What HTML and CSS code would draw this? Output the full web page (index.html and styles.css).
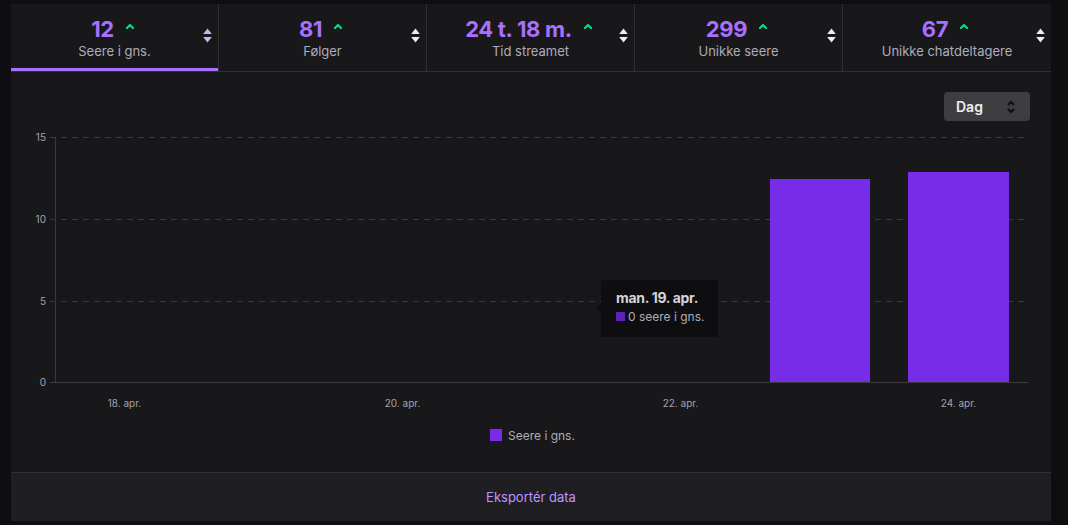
FILE: index.html
```html
<!DOCTYPE html>
<html lang="da">
<head>
  <meta charset="UTF-8">
  <meta name="viewport" content="width=device-width, initial-scale=1.0">
  <title>Statistik</title>
  <link rel="stylesheet" href="styles.css">
</head>
<body>
  <div id="card">
    <div class="tabs">
      <div class="tab active">
        <div class="tab-value"><span class="num">12</span><svg class="up" viewBox="0 0 8 5"><path d="M0.5 4.5 L4 1 L7.5 4.5" /></svg></div>
        <div class="tab-label">Seere i gns.</div>
        <svg class="sort" viewBox="0 0 8 14"><path d="M4 0.5 L8 5.5 L0 5.5 Z M4 13.5 L8 8.5 L0 8.5 Z" /></svg>
      </div>
      <div class="tab">
        <div class="tab-value"><span class="num">81</span><svg class="up" viewBox="0 0 8 5"><path d="M0.5 4.5 L4 1 L7.5 4.5" /></svg></div>
        <div class="tab-label">Følger</div>
        <svg class="sort" viewBox="0 0 8 14"><path d="M4 0.5 L8 5.5 L0 5.5 Z M4 13.5 L8 8.5 L0 8.5 Z" /></svg>
      </div>
      <div class="tab">
        <div class="tab-value"><span class="num">24 t. 18 m.</span><svg class="up" viewBox="0 0 8 5"><path d="M0.5 4.5 L4 1 L7.5 4.5" /></svg></div>
        <div class="tab-label">Tid streamet</div>
        <svg class="sort" viewBox="0 0 8 14"><path d="M4 0.5 L8 5.5 L0 5.5 Z M4 13.5 L8 8.5 L0 8.5 Z" /></svg>
      </div>
      <div class="tab">
        <div class="tab-value"><span class="num">299</span><svg class="up" viewBox="0 0 8 5"><path d="M0.5 4.5 L4 1 L7.5 4.5" /></svg></div>
        <div class="tab-label">Unikke seere</div>
        <svg class="sort" viewBox="0 0 8 14"><path d="M4 0.5 L8 5.5 L0 5.5 Z M4 13.5 L8 8.5 L0 8.5 Z" /></svg>
      </div>
      <div class="tab">
        <div class="tab-value"><span class="num">67</span><svg class="up" viewBox="0 0 8 5"><path d="M0.5 4.5 L4 1 L7.5 4.5" /></svg></div>
        <div class="tab-label">Unikke chatdeltagere</div>
        <svg class="sort" viewBox="0 0 8 14"><path d="M4 0.5 L8 5.5 L0 5.5 Z M4 13.5 L8 8.5 L0 8.5 Z" /></svg>
      </div>
    </div>

    <div class="chart-panel">
      <div class="toolbar">
        <button class="select">Dag
          <svg viewBox="0 0 8 14"><path d="M1 5 L4 2 L7 5 M1 9 L4 12 L7 9" /></svg>
        </button>
      </div>

      <svg class="chart" width="1040" height="347" viewBox="0 0 1040 347">
        <!-- grid -->
        <g class="grid">
          <line x1="39" y1="12.5" x2="1017" y2="12.5" />
          <line x1="39" y1="94.5" x2="1017" y2="94.5" />
          <line x1="39" y1="176.5" x2="1017" y2="176.5" />
        </g>
        <line class="axis" x1="44.5" y1="12" x2="44.5" y2="257" />
        <line class="axis" x1="39" y1="257.5" x2="1017" y2="257.5" />
        <g class="ylabels">
          <text x="35" y="16">15</text>
          <text x="35" y="98">10</text>
          <text x="35" y="180">5</text>
          <text x="35" y="261">0</text>
        </g>
        <!-- bars -->
        <rect class="bar" x="759" y="54" width="100" height="203" />
        <rect class="bar" x="897" y="47" width="101" height="210" />
        <g class="xlabels">
          <text x="113.5" y="282">18. apr.</text>
          <text x="391.5" y="282">20. apr.</text>
          <text x="669.5" y="282">22. apr.</text>
          <text x="947.5" y="282">24. apr.</text>
        </g>
        <!-- legend -->
        <rect class="bar" x="479" y="304" width="12" height="12" />
        <text class="legend" x="497" y="315">Seere i gns.</text>
      </svg>

      <div class="tooltip">
        <div class="tooltip-title">man. 19. apr.</div>
        <div class="tooltip-row"><span class="swatch"></span>0 seere i gns.</div>
      </div>
    </div>

    <div class="footer">
      <a href="#" class="export">Eksportér data</a>
    </div>
  </div>
</body>
</html>
```

FILE: styles.css
```css
body {
  margin: 0;
  background-color: #0e0e10;
  font-family: Inter, "Noto Sans", sans-serif;
  color: #efeff1;
}

#card {
  width: 1040px;
  margin: 4px 0 0 11px;
  background-color: #18181b;
}

.tabs {
  display: grid;
  grid-template-columns: repeat(5, 1fr);
  border-bottom: 1px solid #2f2f35;
}

.tab {
  position: relative;
  height: 67px;
  border-right: 1px solid #2f2f35;
  display: flex;
  flex-direction: column;
  align-items: center;
  padding-top: 11px;
  box-sizing: border-box;
}

.tab:last-child {
  border-right: none;
}

.tab.active::after {
  content: "";
  position: absolute;
  left: 0;
  right: 0;
  bottom: 0;
  height: 3px;
  background-color: #a970ff;
}

.tab-value {
  display: flex;
  align-items: center;
  gap: 12px;
  height: 28px;
  margin-left: -4px;
}

.num {
  font-size: 22px;
  font-weight: 700;
  color: #a970ff;
  letter-spacing: -0.3px;
}

.up {
  width: 8px;
  height: 5px;
  margin-top: -5px;
  fill: none;
  stroke: #00e08c;
  stroke-width: 2;
  stroke-linecap: round;
  stroke-linejoin: round;
}

.tab-label {
  font-size: 13px;
  color: #adadb8;
  margin-top: 0;
}

.sort {
  position: absolute;
  right: 6px;
  top: 24px;
  width: 9px;
  height: 15px;
  fill: #efeff1;
}

.tab.active .sort {
  fill: #c9b6ec;
}

.chart-panel {
  position: relative;
  height: 400px;
  padding-top: 20px;
  box-sizing: border-box;
}

.toolbar {
  display: flex;
  justify-content: flex-end;
  padding-right: 21px;
  margin-bottom: 4px;
}

.select {
  width: 86px;
  height: 29px;
  display: flex;
  align-items: center;
  justify-content: space-between;
  padding: 0 15px 0 12px;
  border: none;
  border-radius: 4px;
  background-color: #3e3e42;
  color: #efeff1;
  font-family: Inter, sans-serif;
  font-size: 14px;
  font-weight: 600;
}

.select svg {
  width: 8px;
  height: 14px;
  fill: none;
  stroke: #0e0e10;
  stroke-width: 2;
}

.chart {
  display: block;
}

.grid line {
  stroke: #3a3a3e;
  stroke-width: 1;
  stroke-dasharray: 6 5;
}

.axis {
  stroke: #3a3a3e;
  stroke-width: 1;
}

.ylabels text {
  font-size: 10px;
  fill: #a3a3ad;
  text-anchor: end;
}

.xlabels text {
  font-size: 10px;
  fill: #a3a3ad;
  text-anchor: middle;
}

.bar {
  fill: #772ce8;
}

.legend {
  font-size: 12px;
  fill: #adadb8;
}

.tooltip {
  position: absolute;
  left: 590px;
  top: 208px;
  width: 117px;
  height: 57px;
  box-sizing: border-box;
  padding: 9px 0 0 15px;
  background-color: #0e0e10;
  border-radius: 2px;
}

.tooltip::before {
  content: "";
  position: absolute;
  left: -5px;
  top: 23px;
  border-top: 5px solid transparent;
  border-bottom: 5px solid transparent;
  border-right: 5px solid #0e0e10;
}

.tooltip-title {
  font-size: 14px;
  font-weight: 700;
  color: #d3d3d9;
  letter-spacing: -0.3px;
}

.tooltip-row {
  display: flex;
  align-items: center;
  gap: 3px;
  margin-top: 3px;
  font-size: 12px;
  color: #adadb8;
}

.swatch {
  width: 9px;
  height: 9px;
  background-color: #5b22b4;
}

.footer {
  height: 48px;
  border-top: 1px solid #2f2f35;
  background-color: #1f1f23;
  display: flex;
  justify-content: center;
  align-items: center;
}

.export {
  color: #bf94ff;
  font-size: 13px;
  text-decoration: none;
}
```
